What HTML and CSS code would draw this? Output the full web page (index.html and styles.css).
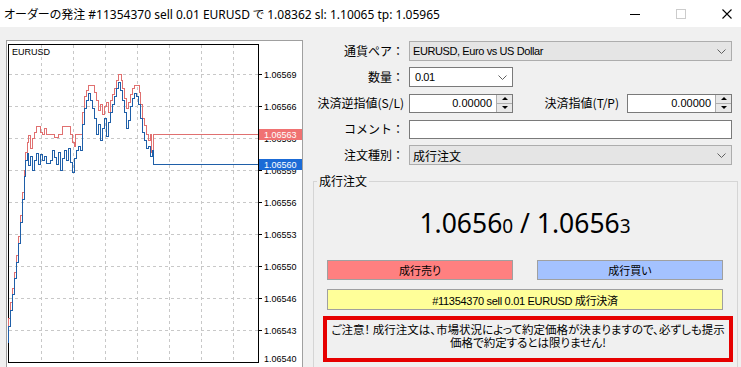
FILE: index.html
```html
<!DOCTYPE html>
<html lang="ja">
<head>
    <meta charset="UTF-8">
    <title>オーダーの発注</title>
    <link rel="stylesheet" href="styles.css">
</head>
<body>
    <div class="titlebar">
        <span class="title">オーダーの発注 #11354370 sell 0.01 EURUSD で 1.08362 sl: 1.10065 tp: 1.05965</span>
        <div class="controls">
            <span class="ctl"><svg width="10" height="10" viewBox="0 0 10 10" shape-rendering="crispEdges"><path d="M0 5.5H10" stroke="#000"/></svg></span>
            <span class="ctl"><svg width="10" height="10" viewBox="0 0 10 10" shape-rendering="crispEdges"><rect x="0.5" y="0.5" width="9" height="9" fill="none" stroke="#cccccc"/></svg></span>
            <span class="ctl"><svg width="10" height="10" viewBox="0 0 10 10"><path d="M0.5 0.5L9.5 9.5M9.5 0.5L0.5 9.5" stroke="#000" stroke-width="1.1"/></svg></span>
        </div>
    </div>

    <div class="content">
        <div class="chart">
            <svg width="297" height="327" viewBox="6 40 297 327" shape-rendering="crispEdges">
                <rect x="6" y="40" width="297" height="327" fill="#fff"/>
                <path d="M6.5 367V40.5H302.5V367" fill="none" stroke="#a0a0a0"/>
                <!-- grid -->
                <g stroke="#c8c8c8" stroke-dasharray="3 3" fill="none">
                    <path d="M41.5 45V362M73.5 45V362M105.5 45V362M137.5 45V362M169.5 45V362M201.5 45V362M233.5 45V362"/>
                    <path d="M9 74.5H258M9 106.5H258M9 138.5H258M9 170.5H258M9 202.5H258M9 234.5H258M9 266.5H258M9 298.5H258M9 330.5H258"/>
                </g>
                <rect x="8.5" y="44.5" width="250" height="318" fill="none" stroke="#000"/>
                <path d="M258 74.5h4M258 106.5h4M258 138.5h4M258 170.5h4M258 202.5h4M258 234.5h4M258 266.5h4M258 298.5h4M258 330.5h4" stroke="#000"/>
                <g font-family="Liberation Sans, sans-serif" font-size="9" fill="#000">
                    <text x="12" y="55">EURUSD</text>
                    <text x="264" y="77.5">1.06569</text>
                    <text x="264" y="109.5">1.06566</text>
                    <text x="264" y="141.5">1.06563</text>
                    <text x="264" y="173.5">1.06559</text>
                    <text x="264" y="205.5">1.06556</text>
                    <text x="264" y="237.5">1.06553</text>
                    <text x="264" y="269.5">1.06550</text>
                    <text x="264" y="301.5">1.06546</text>
                    <text x="264" y="333.5">1.06543</text>
                    <text x="264" y="362">1.06540</text>
                </g>
                <!-- ask -->
                <path fill="none" stroke="#e07070" d="M8.5,333 V318 H10.5 V302 H12.5 V288 H14.5 V272 H16.5 V255 H18.5 V236 H20.5 V215 H22.5 V192 H24.5 V170 H25.5 V152.5 H27.5 V142.5 H28.5 V135.5 H30.5 V148.5 H32.5 V138.5 H34.5 V132.5 H36.5 V126.5 H40.5 V132.5 H42.5 V134.5 H44.5 V128.5 H46.5 V134.5 H54.5 V137.5 H58.5 V134.5 H62.5 V126.5 H68.5 V126.5 H70.5 V134.5 H72.5 V142.5 H74.5 V146.5 H75.5 V134.5 H82.5 V112.5 H84.5 V96.5 H86.5 V90.5 H88.5 V85.5 H94.5 V92.5 H96.5 V100.5 H98.5 V110.5 H100.5 V104.5 H102.5 V114.5 H104.5 V106.5 H106.5 V102.5 H108.5 V112.5 H110.5 V100.5 H112.5 V94.5 H114.5 V88.5 H116.5 V80.5 H118.5 V74.5 H121.5 V80.5 H122.5 V88.5 H124.5 V98.5 H126.5 V108.5 H128.5 V102.5 H130.5 V94.5 H132.5 V88.5 H134.5 V85.5 H139.5 V92.5 H140.5 V104.5 H142.5 V118.5 H144.5 V125.5 H146.5 V134.5 H148.5 V140.5 H150.5 V134.5 H151.5 V152.5 H153.5 V134.5 H258"/>
                <!-- bid -->
                <path fill="none" stroke="#1f5fa8" d="M8.5,343 V326 H10.5 V310 H12.5 V294 H14.5 V278 H16.5 V262 H18.5 V243 H20.5 V222 H22.5 V199 H24.5 V176 H25.5 V160.5 H27.5 V153.5 H28.5 V165.5 H30.5 V156.5 H32.5 V170.5 H34.5 V160.5 H36.5 V153.5 H38.5 V164.5 H40.5 V154.5 H42.5 V160.5 H44.5 V156.5 H46.5 V163.5 H50.5 V160.5 H52.5 V150.5 H54.5 V157.5 H56.5 V164.5 H58.5 V152.5 H60.5 V170.5 H62.5 V158.5 H64.5 V150.5 H66.5 V160.5 H68.5 V148.5 H70.5 V162.5 H72.5 V172.5 H74.5 V158.5 H76.5 V150.5 H78.5 V146.5 H80.5 V150.5 H82.5 V124.5 H84.5 V108.5 H86.5 V100.5 H88.5 V93.5 H90.5 V100.5 H92.5 V108.5 H94.5 V118.5 H96.5 V134.5 H98.5 V124.5 H100.5 V140.5 H102.5 V128.5 H104.5 V118.5 H106.5 V136.5 H108.5 V122.5 H110.5 V112.5 H112.5 V104.5 H114.5 V96.5 H116.5 V88.5 H118.5 V82.5 H120.5 V90.5 H122.5 V100.5 H124.5 V112.5 H126.5 V128.5 H128.5 V120.5 H130.5 V106.5 H132.5 V98.5 H134.5 V93.5 H136.5 V96.5 H138.5 V104.5 H140.5 V118.5 H142.5 V132.5 H144.5 V140.5 H146.5 V148.5 H148.5 V146.5 H150.5 V156.5 H152.5 V150.5 H153.5 V164.5 H258"/>
                <!-- price tags -->
                <rect x="259" y="129" width="43" height="11" fill="#f07272"/>
                <rect x="259" y="159" width="43" height="11" fill="#1b6bd6"/>
                <g font-family="Liberation Sans, sans-serif" font-size="9" fill="#fff">
                    <text x="264" y="138">1.06563</text>
                    <text x="264" y="168">1.06560</text>
                </g>
            </svg>
        </div>

        <div class="panel">
            <div class="form">
                <label class="lbl">通貨ペア：</label>
                <div class="combo combo-gray">
                    <span class="val">EURUSD, Euro vs US Dollar</span>
                    <svg class="chev" width="9" height="5" viewBox="0 0 9 5"><path d="M0.5 0.5L4.5 4.5L8.5 0.5" fill="none" stroke="#606060"/></svg>
                </div>

                <label class="lbl">数量：</label>
                <div class="ctrl-row">
                    <div class="combo combo-white">
                        <span class="val">0.01</span>
                        <svg class="chev" width="9" height="5" viewBox="0 0 9 5"><path d="M0.5 0.5L4.5 4.5L8.5 0.5" fill="none" stroke="#606060"/></svg>
                    </div>
                </div>

                <label class="lbl">決済逆指値(S/L)</label>
                <div class="ctrl-row">
                    <div class="spin">
                        <span class="spin-value">0.00000</span>
                        <span class="spin-btns">
                            <span class="spin-up"></span>
                            <span class="spin-down"></span>
                        </span>
                    </div>
                    <label class="lbl lbl-inline">決済指値(T/P)</label>
                    <div class="spin spin-wide">
                        <span class="spin-value">0.00000</span>
                        <span class="spin-btns">
                            <span class="spin-up"></span>
                            <span class="spin-down"></span>
                        </span>
                    </div>
                </div>

                <label class="lbl">コメント：</label>
                <div class="textbox"></div>

                <label class="lbl">注文種別：</label>
                <div class="combo combo-gray">
                    <span class="val val-jp">成行注文</span>
                    <svg class="chev" width="9" height="5" viewBox="0 0 9 5"><path d="M0.5 0.5L4.5 4.5L8.5 0.5" fill="none" stroke="#606060"/></svg>
                </div>
            </div>

            <fieldset class="market">
                <legend>成行注文</legend>
                <div class="quote">1.0656<small>0</small> / 1.0656<small>3</small></div>
                <div class="trade-buttons">
                    <button class="btn btn-sell">成行売り</button>
                    <button class="btn btn-buy">成行買い</button>
                </div>
                <button class="btn btn-close">#11354370 sell 0.01 EURUSD 成行決済</button>
                <div class="notice">ご注意！ 成行注文は、市場状況によって約定価格が決まりますので、必ずしも提示<br>価格で約定するとは限りません!</div>
            </fieldset>
        </div>
    </div>
</body>
</html>
```

FILE: styles.css
```css
* {
    box-sizing: border-box;
    margin: 0;
    padding: 0;
}

body {
    width: 741px;
    height: 367px;
    overflow: hidden;
    background: #f0f0f0;
    color: #000;
    font-family: "Liberation Sans", "Noto Sans CJK JP", sans-serif;
    font-size: 11px;
}

/* window title */
.titlebar {
    height: 27px;
    background: #fff;
    display: flex;
    align-items: center;
}

.title {
    flex: 1;
    padding-left: 4px;
    font-family: "Noto Sans", "Noto Sans CJK JP", sans-serif;
    font-size: 12px;
    font-feature-settings: "palt";
    white-space: nowrap;
}

.controls {
    display: flex;
    margin-right: -9px;
}

.ctl {
    width: 46px;
    height: 27px;
    display: flex;
    align-items: center;
    justify-content: center;
}

.ctl svg {
    display: block;
}

.content {
    display: flex;
}

.chart {
    margin: 13px 0 0 6px;
    width: 297px;
    height: 327px;
}

.chart svg {
    display: block;
}

.panel {
    flex: 1;
    min-width: 0;
    padding: 14px 9px 0 7px;
}

/* order form */
.form {
    display: grid;
    grid-template-columns: 94px 323px;
    grid-auto-rows: 20px;
    column-gap: 5px;
    row-gap: 6px;
}

.lbl {
    align-self: center;
    text-align: right;
    font-family: "Noto Sans CJK JP", sans-serif;
    font-size: 12px;
    line-height: 16px;
    white-space: nowrap;
}

.ctrl-row {
    display: flex;
    align-items: center;
}

.lbl-inline {
    flex: 1;
    padding-right: 8px;
}

.combo {
    height: 20px;
    display: flex;
    align-items: center;
    justify-content: space-between;
    padding: 0 5px 0 3px;
    border: 1px solid #adadad;
}

.combo-gray {
    background: #e5e5e5;
}

.combo-white {
    width: 104px;
    background: #fff;
    border-color: #7a7a7a;
    padding-left: 5px;
}

.val {
    letter-spacing: -0.4px;
    white-space: nowrap;
}

.val-jp {
    font-family: "Noto Sans CJK JP", sans-serif;
    font-size: 12px;
    letter-spacing: 0;
}

.chev {
    display: block;
}

.spin {
    width: 104px;
    height: 19px;
    display: flex;
    border: 1px solid #7a7a7a;
    background: #fff;
}

.spin-wide {
    width: 105px;
}

.spin-value {
    flex: 1;
    text-align: right;
    padding-right: 4px;
    line-height: 17px;
}

.spin-btns {
    width: 16px;
    display: flex;
    flex-direction: column;
    border-left: 1px solid #adadad;
    background: #e8e8e8;
}

.spin-up,
.spin-down {
    flex: 1;
    display: flex;
    align-items: center;
    justify-content: center;
}

.spin-up {
    border-bottom: 1px solid #adadad;
}

.spin-up::after,
.spin-down::after {
    content: "";
    border-left: 3px solid transparent;
    border-right: 3px solid transparent;
}

.spin-up::after {
    border-bottom: 3px solid #000;
}

.spin-down::after {
    border-top: 3px solid #000;
}

.textbox {
    height: 19px;
    align-self: center;
    border: 1px solid #7a7a7a;
    background: #fff;
}

/* market order group */
.market {
    margin: 8px 0 0 3px;
    width: 425px;
    min-width: 0;
    border: 1px solid #d5d5d5;
    padding: 19px 14px 6px 13px;
}

.market legend {
    margin-left: -10px;
    padding: 0 2px;
    font-family: "Noto Sans CJK JP", sans-serif;
    font-size: 12px;
    line-height: 16px;
}

.quote {
    text-align: center;
    font-family: "Noto Sans", sans-serif;
    font-size: 26.5px;
    line-height: 30px;
}

.quote small {
    font-size: 19px;
}

.trade-buttons {
    display: grid;
    grid-template-columns: 186px 186px;
    column-gap: 24px;
    margin-top: 19px;
}

.btn {
    height: 20px;
    border: 1px solid #a0a0a0;
    color: #000;
    font-family: "Liberation Sans", "Noto Sans CJK JP", sans-serif;
    font-size: 11px;
    font-feature-settings: "palt";
}

.btn-sell {
    background: #ff8080;
}

.btn-buy {
    background: #a4c2ff;
}

.btn-close {
    display: block;
    width: 100%;
    height: 21px;
    margin-top: 9px;
    background: #ffff99;
    letter-spacing: -0.3px;
}

.notice {
    margin: 6px -10px 0 -4px;
    height: 46px;
    border: 4px solid #e60000;
    padding-top: 3px;
    text-align: center;
    font-family: "Noto Sans CJK JP", sans-serif;
    font-size: 11.5px;
    line-height: 13px;
    font-feature-settings: "palt";
    white-space: nowrap;
}
```
